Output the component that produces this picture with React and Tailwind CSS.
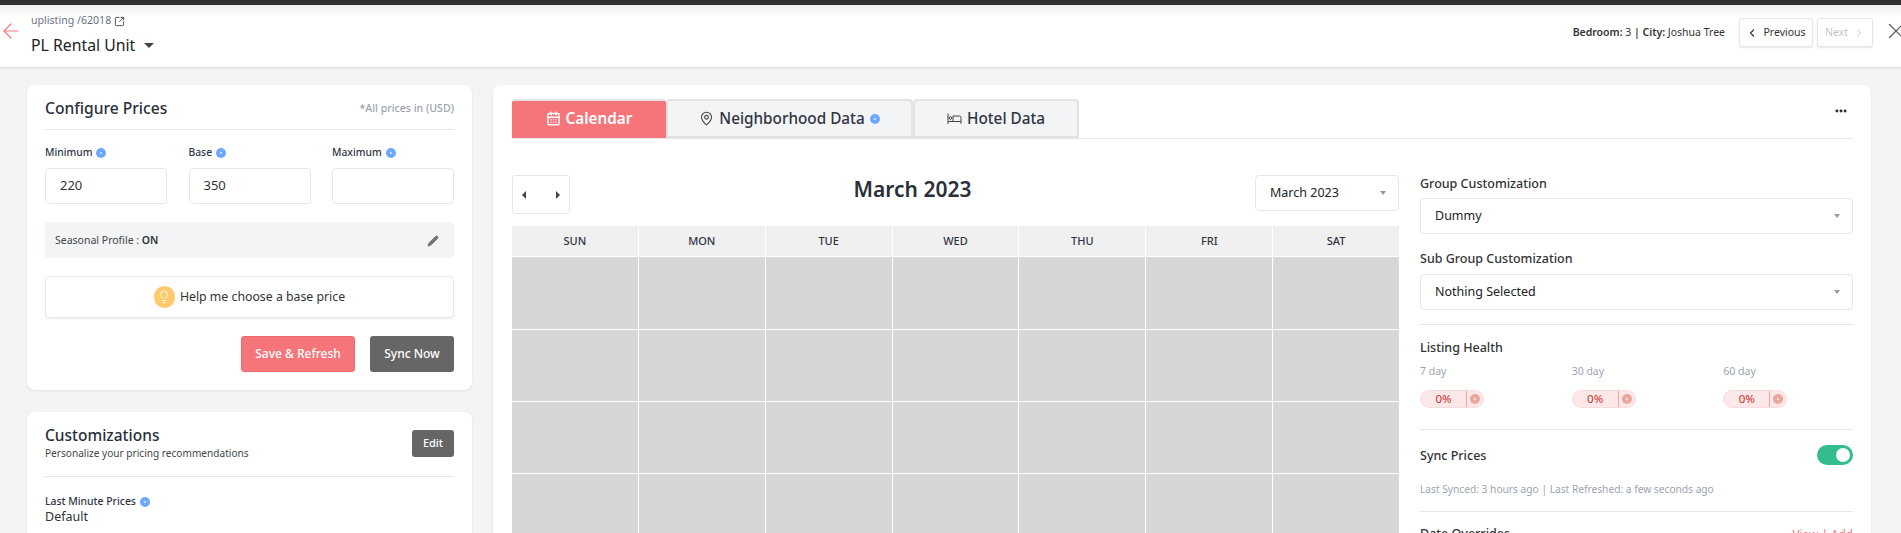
import React from "react";
import { ArrowLeft, SquareArrowOutUpRight, Pencil, Lightbulb, ChevronLeft, ChevronRight, X, MapPin, CalendarDays, MoreHorizontal } from "lucide-react";

const Info = ({ c = "bg-[#6ea8fe]", s = "w-[10px] h-[10px]" }) => (
  <span className={`inline-flex items-center justify-center rounded-full ${c} ${s}`}>
    <span className="w-[2px] h-[2px] rounded-full bg-white/80" />
  </span>
);

const Caret = ({ c = "border-t-[#999]" }) => (
  <span className={`w-0 h-0 border-x-[3.5px] border-x-transparent border-t-[4px] ${c}`} />
);

const PriceField = ({ label, value }) => (
  <div className="w-[122px] flex flex-col">
    <div className="h-[15px] flex items-center gap-[4px] text-[10.3px] font-medium text-[#2f3542]">
      {label} <Info />
    </div>
    <div className="mt-[8px] h-[36px] border border-[#e5e7eb] rounded-[4px] pl-[14px] flex items-center text-[13px] text-[#333]">{value}</div>
  </div>
);

const Select = ({ text }) => (
  <div className="h-[36px] border border-[#e5e7eb] rounded-[4px] pl-[14px] pr-[12px] flex items-center justify-between text-[12.5px] text-[#222]">
    <span>{text}</span>
    <Caret />
  </div>
);

const Pill = () => (
  <div className="w-[64px] h-[18px] rounded-full bg-[#fce8e8] border border-[#f8dcdc] flex items-center text-[11.5px] text-[#c9302c]">
    <span className="w-[45px] text-center">0%</span>
    <span className="h-full border-l border-[#e8a79f] flex-1 flex items-center justify-center">
      <Info c="bg-[#e9a79d]" />
    </span>
  </div>
);

const Hr = ({ cls = "" }) => <div className={`h-px bg-[#e5e7eb] ${cls}`} />;

const HotelBed = () => (
  <svg width="15" height="13" viewBox="0 0 15 13" fill="none" stroke="#444" strokeWidth="1">
    <path d="M1 1.5V12M1 9.5h13M14 12V5.5a1.5 1.5 0 0 0-1.5-1.5H6v5.5" />
    <circle cx="3.5" cy="6" r="1.3" />
  </svg>
);

export default function App() {
  const days = ["SUN", "MON", "TUE", "WED", "THU", "FRI", "SAT"];
  return (
    <div className="w-[1901px] h-[533px] overflow-hidden bg-[#f3f4f6] flex flex-col font-['Noto_Sans',sans-serif] text-[#2a2f3a]">
      <div className="h-[5px] bg-[#2f2f2f] shrink-0" />
      <header className="h-[62px] shrink-0 bg-white bg-gradient-to-b from-[#eeeeee] to-white to-[18%] shadow-[0_1px_2px_rgba(0,0,0,0.12)] flex relative">
        <div className="w-[31px] pt-[14px] shrink-0 -ml-px mr-px">
          <ArrowLeft className="w-[24px] h-[24px] text-[#f5757a] max-w-none" strokeWidth={1.2} />
        </div>
        <div className="flex flex-col">
          <div className="mt-[9px] h-[14px] flex items-center gap-[3px] text-[10.6px] text-[#6b7280]">
            uplisting /62018 <SquareArrowOutUpRight className="w-[11px] h-[11px] text-[#444]" />
          </div>
          <div className="mt-[6px] flex items-center gap-[9px] text-[15.8px] text-[#222]">
            PL Rental Unit <span className="w-0 h-0 border-x-[5px] border-x-transparent border-t-[5px] border-t-[#444]" />
          </div>
        </div>
        <div className="ml-auto flex items-start pt-[13px]">
          <div className="h-[29px] flex items-center text-[10.5px] text-[#333] mr-[14px]">
            <b className="font-semibold">Bedroom:</b>&nbsp;3&nbsp;<b className="font-semibold">| City:</b>&nbsp;Joshua Tree
          </div>
          <div className="w-[74px] h-[29px] bg-white border border-[#e5e7eb] rounded-[3px] shadow-[0_1px_2px_rgba(0,0,0,0.1)] flex items-center justify-center gap-[5px] text-[10.5px] text-[#333]">
            <ChevronLeft className="w-[12px] h-[12px]" strokeWidth={2.5} /> Previous
          </div>
          <div className="ml-[4px] w-[56px] h-[29px] bg-white border border-[#e5e7eb] rounded-[3px] shadow-[0_1px_2px_rgba(0,0,0,0.1)] flex items-center justify-center gap-[5px] text-[10.5px] text-[#c4c4c4]">
            Next <ChevronRight className="w-[12px] h-[12px]" />
          </div>
          <div className="w-[28px] pl-[10px]">
            <X className="w-[26px] h-[26px] text-[#555] max-w-none" strokeWidth={1.1} />
          </div>
        </div>
      </header>

      <main className="flex pl-[27px] pt-[18px] gap-[21px] items-start">
        <div className="w-[445px] shrink-0 flex flex-col gap-[22px]">
          <section className="h-[305px] bg-white rounded-[8px] shadow-[0_1px_3px_rgba(0,0,0,0.08)] px-[18px] flex flex-col">
            <div className="h-[45px] pt-[3px] flex items-center justify-between border-b border-[#e5e7eb]">
              <span className="text-[15.6px] font-medium text-[#2a2f3a]">Configure Prices</span>
              <span className="text-[10.6px] font-medium text-[#9ca3af]">*All prices in (USD)</span>
            </div>
            <div className="mt-[15px] flex justify-between">
              <PriceField label="Minimum" value="220" />
              <PriceField label="Base" value="350" />
              <PriceField label="Maximum" value="" />
            </div>
            <div className="mt-[18px] h-[36px] bg-[#f3f4f6] rounded-[4px] pl-[10px] pr-[15px] pt-[1px] flex items-center justify-between text-[10.5px] text-[#444]">
              <span>Seasonal Profile : <b className="font-semibold text-[#333]">ON</b></span>
              <Pencil className="w-[12px] h-[12px] text-[#777] fill-[#777]" />
            </div>
            <div className="mt-[18px] h-[42px] border border-[#e5e7eb] rounded-[4px] shadow-[0_1px_2px_rgba(0,0,0,0.08)] flex items-center justify-center gap-[5px] text-[12.3px] text-[#333]">
              <span className="w-[21px] h-[22px] rounded-full bg-[#fdc96b] flex items-center justify-center">
                <Lightbulb className="w-[14px] h-[14px] text-white" strokeWidth={1.5} />
              </span>
              Help me choose a base price
            </div>
            <div className="mt-[18px] flex justify-end gap-[15px]">
              <button className="w-[114px] h-[36px] rounded-[3px] bg-[#f5757a] border border-[#ec6a70] text-white text-[12px] font-medium">Save &amp; Refresh</button>
              <button className="w-[84px] h-[36px] rounded-[3px] bg-[#666666] text-white text-[12px] font-medium">Sync Now</button>
            </div>
          </section>

          <section className="h-[200px] bg-white rounded-[8px] shadow-[0_1px_3px_rgba(0,0,0,0.08)] px-[18px] flex flex-col">
            <div className="h-[65px] flex justify-between border-b border-[#e5e7eb]">
              <div className="flex flex-col pt-[13px]">
                <span className="text-[15.5px] leading-[20px] font-medium">Customizations</span>
                <span className="text-[10.1px] leading-[14px] mt-[1px] text-[#444]">Personalize your pricing recommendations</span>
              </div>
              <button className="mt-[18px] w-[42px] h-[27px] rounded-[3px] bg-[#666666] text-white text-[11px] font-medium">Edit</button>
            </div>
            <div className="mt-[17px] h-[15px] flex items-center gap-[4px] text-[10.4px] font-medium text-[#2f3542]">
              Last Minute Prices <Info />
            </div>
            <div className="text-[12.5px] leading-[16px] text-[#333]">Default</div>
          </section>
        </div>

        <section className="w-[1378px] shrink-0 h-[600px] bg-white rounded-[8px] shadow-[0_1px_3px_rgba(0,0,0,0.08)] pl-[19px] pr-[18px] pt-[14px]">
          <div className="h-[40px] flex items-start border-b border-[#e5e7eb] relative">
            <div className="w-[154px] h-[39px] bg-[#f5757a] border-t-2 border-[#e2e3e5] rounded-t-[3px] flex items-center justify-center gap-[5px] pb-[3px] text-white text-[15.3px] font-semibold">
              <CalendarDays className="w-[15px] h-[15px]" strokeWidth={2.2} /> Calendar
            </div>
            <div className="w-[247px] h-[39px] bg-[#f3f4f6] border-2 border-[#e2e3e5] rounded-t-[4px] flex items-center justify-center gap-[5px] text-[15.3px] font-medium text-[#2f3542]">
              <MapPin className="w-[15px] h-[15px] text-[#444]" strokeWidth={1.7} /> Neighborhood Data <Info />
            </div>
            <div className="w-[166px] h-[39px] bg-[#f3f4f6] border-2 border-[#e2e3e5] rounded-t-[4px] flex items-center justify-center gap-[5px] text-[15.3px] font-medium text-[#2f3542]">
              <HotelBed /> Hotel Data
            </div>
            <MoreHorizontal className="absolute right-[5px] top-[5px] w-[14px] h-[14px] text-[#222]" strokeWidth={3} />
          </div>

          <div className="flex justify-between mt-[36px]">
            <div className="w-[887px] shrink-0">
              <div className="h-[51px] flex items-start relative">
                <div className="w-[58px] h-[39px] border border-[#e5e7eb] rounded-[3px] flex items-center justify-between px-[9px]">
                  <span className="w-0 h-0 border-y-[4px] border-y-transparent border-r-[4px] border-r-[#444]" />
                  <span className="w-0 h-0 border-y-[4px] border-y-transparent border-l-[4px] border-l-[#444]" />
                </div>
                <div className="flex-1 text-center text-[21px] leading-[30px] font-semibold text-[#2a2f3a] -mt-[1px]">March 2023</div>
                <div className="w-[144px] h-[36px] border border-[#e5e7eb] rounded-[4px] pl-[14px] pr-[12px] flex items-center justify-between text-[12.5px] text-[#222]">
                  <span>March 2023</span><Caret />
                </div>
              </div>
              <div className="grid grid-cols-7 gap-px">
                {days.map((d) => (
                  <div key={d} className="h-[30px] bg-[#f0f0f0] flex items-center justify-center text-[11px] font-medium text-[#2f3542]">{d}</div>
                ))}
                {Array.from({ length: 35 }).map((_, i) => (
                  <div key={i} className={i < 7 ? "h-[72px] bg-[#d6d6d6]" : "h-[71px] bg-[#d6d6d6]"} />
                ))}
              </div>
            </div>

            <div className="w-[433px] shrink-0 mt-[1px]">
              <div className="text-[12.5px] leading-[16px] font-medium text-[#333]">Group Customization</div>
              <div className="mt-[6px]"><Select text="Dummy" /></div>
              <div className="mt-[17px] text-[12.5px] leading-[16px] font-medium text-[#333]">Sub Group Customization</div>
              <div className="mt-[7px]"><Select text="Nothing Selected" /></div>
              <Hr cls="mt-[14px]" />
              <div className="mt-[15px] text-[12.5px] leading-[16px] font-medium text-[#333]">Listing Health</div>
              <div className="mt-[8px] grid grid-cols-3 gap-x-[88px] w-[367px]">
                {["7 day", "30 day", "60 day"].map((t) => (
                  <div key={t}>
                    <div className="text-[10.5px] leading-[14px] text-[#9ca3af]">{t}</div>
                    <div className="mt-[12px]"><Pill /></div>
                  </div>
                ))}
              </div>
              <Hr cls="mt-[21px]" />
              <div className="mt-[14px] flex items-center justify-between h-[21px]">
                <span className="text-[12.5px] font-medium text-[#333] mt-[3px]">Sync Prices</span>
                <span className="w-[36px] h-[20px] rounded-full bg-[#33bd8c] flex items-center justify-end pr-[3px]">
                  <span className="w-[14px] h-[14px] rounded-full bg-white" />
                </span>
              </div>
              <div className="mt-[17px] text-[10.2px] leading-[14px] text-[#9ca3af]">Last Synced: 3 hours ago | Last Refreshed: a few seconds ago</div>
              <Hr cls="mt-[15px]" />
              <div className="mt-[14px] flex justify-between text-[12.5px] leading-[16px]">
                <span className="font-medium text-[#333]">Date Overrides</span>
                <span className="text-[#f5757a] text-[11.8px]">View | Add</span>
              </div>
            </div>
          </div>
        </section>
      </main>
    </div>
  );
}
